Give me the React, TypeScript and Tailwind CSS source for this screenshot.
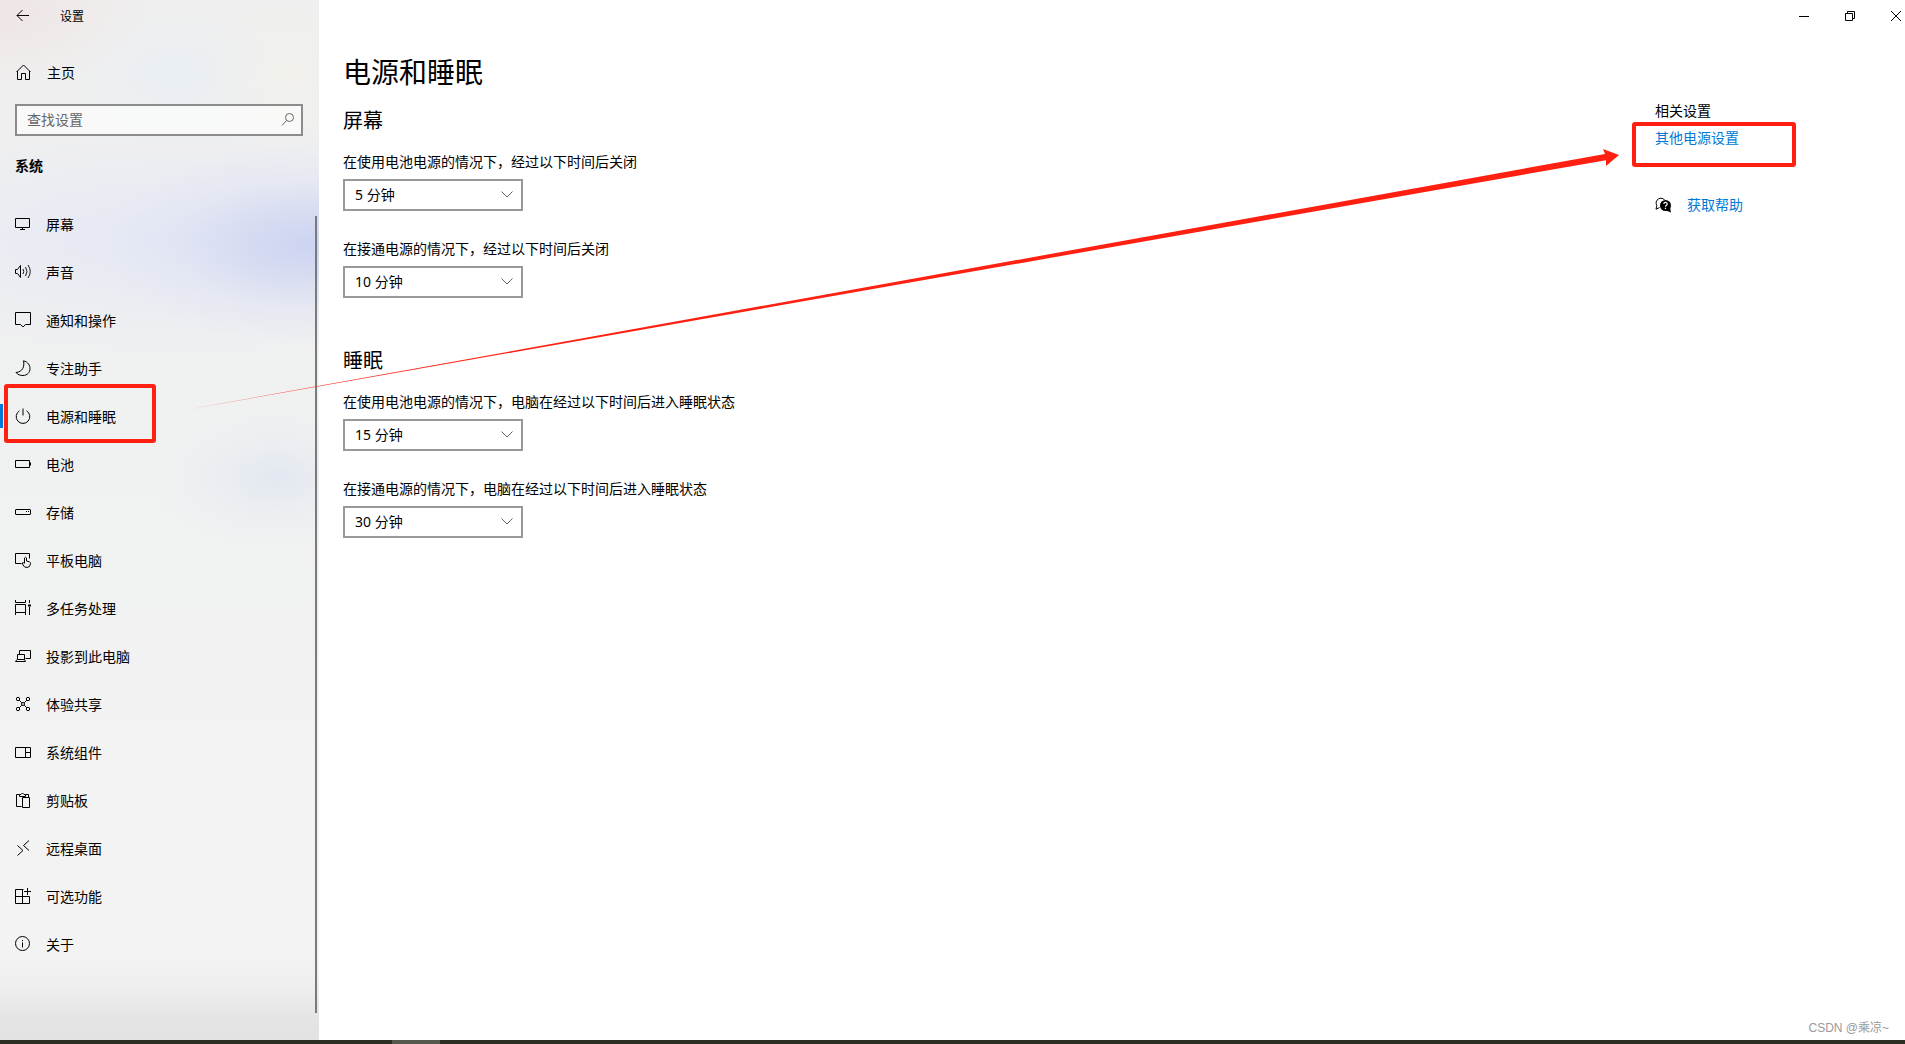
import type { ReactNode } from "react";

const navItems: { label: string; icon: ReactNode; active?: boolean }[] = [
  {
    label: "屏幕",
    icon: (
      <>
        <path d="M.5 2.500h14v9H.5z" />
        <path d="M7.500 11.500v2M5 13.500h5" />
      </>
    ),
  },
  {
    label: "声音",
    icon: (
      <>
        <path d="M.5 5.500h2l3-4v12l-3-4h-2z" />
        <path d="M8 5q1.500 2.500 0 5M10.500 3q3 4.500 0 9M13 1q4.500 6.500 0 13" strokeWidth="0.9" />
      </>
    ),
  },
  {
    label: "通知和操作",
    icon: <path d="M.5.500h15v12h-5l-2.500 2.500-2.500-2.500h-5z" />,
  },
  {
    label: "专注助手",
    icon: <path d="M8.500.800c9 2 8.500 14.500-.5 14.700-3 0-5.500-1-7-3C7.500 12 9.800 6.500 8.500.800z" />,
  },
  {
    label: "电源和睡眠",
    active: true,
    icon: <path d="M8 .500v7M4.500 2.800a6.800 6.800 0 1 0 7 0" />,
  },
  {
    label: "电池",
    icon: (
      <>
        <path d="M.5 4.500h14v7H.5z" />
        <path d="M15.500 6.500v3" />
      </>
    ),
  },
  {
    label: "存储",
    icon: (
      <>
        <rect x=".5" y="5.500" width="15" height="5" rx=".5" />
        <path d="M11 7.500h1M13 7.500h1" />
      </>
    ),
  },
  {
    label: "平板电脑",
    icon: (
      <>
        <path d="M6.500 11.500h-6v-10h14v5" />
        <path d="M9.500 11V6q1-1.500 2 0v3l3 .8q1 .5 1 2-.5 3.700-3.500 3.700T8 13l-.8-2q1-1 2.300.5" />
      </>
    ),
  },
  {
    label: "多任务处理",
    icon: (
      <>
        <path d="M.5 0v2.500h10V0M.5 15v-2.500M10.500 15v-2.500M.5 4.500h10v8H.5zM14.500 0v3M14.500 7v8" />
        <path d="M13 4.500h3v2h-3z" fill="currentColor" stroke="none" />
      </>
    ),
  },
  {
    label: "投影到此电脑",
    icon: (
      <>
        <path d="M4.500 6.500v-4h11v8h-5" />
        <path d="M2.500 6.500h7v5h-7zM2 11.500l-1.500 2h10l-1-2" />
      </>
    ),
  },
  {
    label: "体验共享",
    icon: (
      <>
        <circle cx="3" cy="3" r="1.700" />
        <circle cx="13" cy="3" r="1.700" />
        <circle cx="3" cy="13" r="1.700" />
        <circle cx="13" cy="13" r="1.700" />
        <circle cx="8" cy="8" r="1.500" />
        <path d="m4.200 4.200 2.600 2.600M11.800 4.200 9.200 6.800M4.200 11.800l2.600-2.600M11.800 11.800 9.200 9.200" />
      </>
    ),
  },
  {
    label: "系统组件",
    icon: <path d="M.5 3.500h15v10H.5zM10.500 3.500v10M10.500 8.500h5" />,
  },
  {
    label: "剪贴板",
    icon: (
      <>
        <path d="M6.500 14.500h-5v-12h3v2h6v-2h3v3M4.500 2.500h1.500q1.500-3 3 0h1.500" />
        <path d="M7.500 5.500h7v10h-7z" />
      </>
    ),
  },
  {
    label: "远程桌面",
    icon: <path d="M2.500 5.500l5.500 5-5.500 5M14 .500 8.500 5.500l5.500 5" />,
  },
  {
    label: "可选功能",
    icon: <path d="M8.500 1.500h-8v14h14v-7M.5 8.500h14M7.500 1.500v14M12.500 0v7M9 3.500h7" />,
  },
  {
    label: "关于",
    icon: (
      <>
        <circle cx="7.500" cy="7.500" r="7" />
        <path d="M7.500 6.500v5M7.500 4v1.200" />
      </>
    ),
  },
];

const sections = [
  {
    title: "屏幕",
    fields: [
      { id: "screen-battery", label: "在使用电池电源的情况下，经过以下时间后关闭", value: "5 分钟" },
      { id: "screen-plugged", label: "在接通电源的情况下，经过以下时间后关闭", value: "10 分钟" },
    ],
  },
  {
    title: "睡眠",
    fields: [
      { id: "sleep-battery", label: "在使用电池电源的情况下，电脑在经过以下时间后进入睡眠状态", value: "15 分钟" },
      { id: "sleep-plugged", label: "在接通电源的情况下，电脑在经过以下时间后进入睡眠状态", value: "30 分钟" },
    ],
  },
];

const durations = ["5 分钟", "10 分钟", "15 分钟", "30 分钟"];

function Icon({ children }: { children: ReactNode }) {
  return (
    <svg
      viewBox="0 0 16 16"
      className="size-4 shrink-0 overflow-visible"
      fill="none"
      stroke="currentColor"
      aria-hidden
    >
      {children}
    </svg>
  );
}

function Highlight({ className }: { className: string }) {
  return (
    <span
      className={`pointer-events-none absolute rounded-[3px] border-4 border-[#ff2012] ${className}`}
      aria-hidden
    />
  );
}

function Sidebar() {
  return (
    <aside className="flex w-[319px] shrink-0 flex-col bg-[#f1f1f1] bg-[linear-gradient(to_top,#e2e2e2_0,#e5e5e5_25px,rgba(236,236,236,0.6)_55px,transparent_90px),radial-gradient(ellipse_210px_100px_at_310px_245px,rgba(200,208,240,0.85)_0%,rgba(204,211,241,0.65)_30%,rgba(212,218,242,0.25)_65%,transparent_100%),radial-gradient(ellipse_380px_120px_at_180px_240px,rgba(226,230,246,0.8)_0%,rgba(228,231,246,0.4)_50%,transparent_100%),radial-gradient(ellipse_120px_70px_at_275px_478px,rgba(225,231,241,0.9)_0%,rgba(230,235,242,0.4)_55%,rgba(240,241,242,0)_100%),radial-gradient(ellipse_110px_70px_at_175px_75px,rgba(232,238,244,0.9)_0%,rgba(234,239,244,0.4)_50%,rgba(240,241,242,0)_100%),radial-gradient(ellipse_90px_80px_at_285px_75px,rgba(242,241,235,0.8)_0%,rgba(241,241,239,0)_100%),radial-gradient(ellipse_150px_80px_at_0_10px,#efe5e5_0%,transparent_100%),linear-gradient(to_bottom,#efefef_0,#f0f1f1_500px,#f3f3f3_850px)]">
      <div className="flex h-8 items-center gap-7 px-4">
        <button type="button" aria-label="返回">
          <Icon>
            <path d="M1 7.500h12M6.500 2 1 7.500 6.500 13" />
          </Icon>
        </button>
        <span className="pt-[2px] text-xs">设置</span>
      </div>
      <a href="#home" className="mt-4 flex h-12 items-center gap-[15px] px-4">
        <Icon>
          <path d="M1.500 7v8.500h4v-6h4v6h4V7M.5 8 7.500 1l7 7" />
        </Icon>
        <span className="pt-[2px]">主页</span>
      </a>
      <label className="mt-2 mr-4 ml-[15px] flex h-8 items-center border-2 border-[#8c8c8c] bg-white/60 pr-[5px] pl-[10px]">
        <input
          type="search"
          aria-label="查找设置"
          placeholder="查找设置"
          className="min-w-0 flex-1 bg-transparent outline-none placeholder:text-[#666]"
        />
        <span className="text-[#666]">
          <Icon>
            <circle cx="9.500" cy="5.500" r="4" />
            <path d="M6.500 8.500 2 13.500" />
          </Icon>
        </span>
      </label>
      <h2 className="mt-5 ml-[15px] leading-5 font-bold">系统</h2>
      <div className="mt-6 flex flex-1 items-start">
        <nav className="flex-1">
          {navItems.map((item) => (
            <a
              key={item.label}
              href={`#${item.label}`}
              className="relative flex h-12 items-center gap-[15px] pl-[15px]"
            >
              {item.active && (
                <>
                  <span className="absolute top-3 left-0 h-6 w-[3px] bg-[#0078d7]" />
                  <Highlight className="-top-2 left-1 h-[59px] w-[152px]" />
                </>
              )}
              <Icon>{item.icon}</Icon>
              <span className="pt-[2px]">{item.label}</span>
            </a>
          ))}
        </nav>
        <div className="mt-4 mr-[2px] mb-[27px] w-[2px] self-stretch bg-[#7a7a7a]" />
      </div>
    </aside>
  );
}

function DurationField({ id, label, value }: { id: string; label: string; value: string }) {
  return (
    <div className="flex flex-col items-start gap-[7px]">
      <label htmlFor={id} className="leading-5">
        {label}
      </label>
      <div className="relative">
        <select
          id={id}
          defaultValue={value}
          className="block h-8 w-[180px] appearance-none border-2 border-[#999] bg-white pl-[10px] outline-none"
        >
          {durations.map((d) => (
            <option key={d}>{d}</option>
          ))}
        </select>
        <svg
          viewBox="0 0 12 7"
          className="pointer-events-none absolute top-3 right-[10px] h-[7px] w-3"
          fill="none"
          stroke="#666"
          aria-hidden
        >
          <path d="M.5.500 6 6 11.500.500" />
        </svg>
      </div>
    </div>
  );
}

function WindowControls() {
  return (
    <div className="flex h-8 justify-end">
      <button type="button" aria-label="最小化" className="flex w-[46px] items-center justify-center">
        <svg viewBox="0 0 10 10" className="size-[10px]" stroke="currentColor">
          <path d="M0 5.500h10" />
        </svg>
      </button>
      <button type="button" aria-label="还原" className="flex w-[46px] items-center justify-center">
        <svg viewBox="0 0 10 10" className="size-[10px]" fill="none" stroke="currentColor">
          <path d="M.5 2.500h7v7h-7zM2.500 2.500v-2h7v7h-2" />
        </svg>
      </button>
      <button type="button" aria-label="关闭" className="flex w-8 items-center justify-end pr-1">
        <svg viewBox="0 0 10 10" className="size-[10px]" stroke="currentColor">
          <path d="m0 0 10 10M10 0 0 10" />
        </svg>
      </button>
    </div>
  );
}

function RelatedSettings() {
  return (
    <aside className="flex w-[250px] shrink-0 flex-col items-start pt-[69px]">
      <h2 className="leading-5">相关设置</h2>
      <a href="#power-options" className="relative mt-[7px] leading-5 text-[#0078d7]">
        其他电源设置
        <Highlight className="-top-[6px] -left-[23px] h-[45px] w-[164px]" />
      </a>
      <a href="#help" className="mt-[47px] flex items-center gap-4 leading-5 text-[#0078d7]">
        <svg viewBox="0 0 16 16" className="size-4 overflow-visible" fill="none" stroke="#000" aria-hidden>
          <path d="M4.500 10.500 1 12.300 1.800 8.500A4.700 4.700 0 1 1 10 3.500" />
          <circle cx="10.500" cy="8.500" r="5.500" fill="#000" stroke="none" />
          <path d="m11 13.500 5 2-1-5z" fill="#000" stroke="none" />
          <path
            d="M8.800 7c.1-2.200 3.500-2 3.400.1-.1 1.200-1.700 1.200-1.700 2.600M10.500 10.800v1.200"
            stroke="#fff"
            strokeWidth="1.200"
          />
        </svg>
        获取帮助
      </a>
    </aside>
  );
}

export default function App() {
  return (
    <div className="relative flex min-h-screen flex-col overflow-hidden bg-white font-['Noto_Sans','Noto_Sans_CJK_SC',sans-serif] text-sm text-black">
      <div className="flex flex-1">
        <Sidebar />
        <div className="flex min-w-0 flex-1 flex-col">
          <WindowControls />
          <div className="flex flex-1 pl-6">
            <main className="flex-1 pt-[22px]">
              <h1 className="text-[28px] leading-9">电源和睡眠</h1>
              <div className="mt-[17px] flex flex-col gap-[49px]">
                {sections.map((section) => (
                  <section key={section.title}>
                    <h2 className="text-xl leading-7">{section.title}</h2>
                    <div className="mt-[17px] flex flex-col gap-7">
                      {section.fields.map((field) => (
                        <DurationField key={field.id} {...field} />
                      ))}
                    </div>
                  </section>
                ))}
              </div>
            </main>
            <RelatedSettings />
          </div>
          <p className="self-end pr-4 pb-[2px] font-['Liberation_Sans','Noto_Sans_CJK_SC',sans-serif] text-xs leading-5 text-[#999]">
            CSDN @乘凉~
          </p>
        </div>
      </div>

      <footer className="flex h-1 bg-[#2b2e20]">
        <div className="ml-[392px] w-12 bg-[#55584c]" />
      </footer>

      {/* annotation arrow from the nav entry to the related link */}
      <svg
        viewBox="0 0 1905 1044"
        className="pointer-events-none absolute top-0 left-0 w-full"
        aria-hidden
      >
        <path d="M185 410 1605 154 1603 149 1619 155 1606 166 1606 160.200z" fill="#ff2012" />
      </svg>
    </div>
  );
}
